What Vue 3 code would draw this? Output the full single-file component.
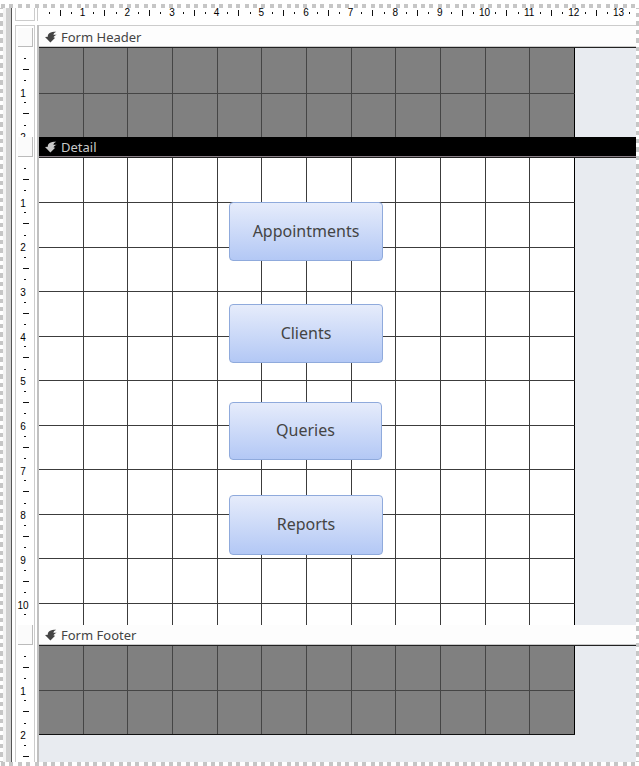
<script setup>
import { reactive } from 'vue'

const sections = [
  { id: 'header', title: 'Form Header', rows: 2, marks: 2 },
  { id: 'detail', title: 'Detail', rows: 11, marks: 10, selected: true },
  { id: 'footer', title: 'Form Footer', rows: 2, marks: 2 },
]

const columns = 12
const rulerUnits = 13

const controls = reactive([
  { caption: 'Appointments', left: 190, top: 44, width: 154, height: 59 },
  { caption: 'Clients', left: 190, top: 146, width: 154, height: 59 },
  { caption: 'Queries', left: 190, top: 244, width: 153, height: 58 },
  { caption: 'Reports', left: 190, top: 337, width: 154, height: 60 },
])

const place = (c) => ({
  left: c.left + 'px',
  top: c.top + 'px',
  width: c.width + 'px',
  height: c.height + 'px',
})
</script>

<template>
  <main class="designer">
    <div class="edge edge-top"></div>
    <div class="middle">
      <div class="edge edge-side"></div>
      <div class="splitter"></div>
      <div class="form">
        <div class="ruler-row">
          <div class="corner"></div>
          <div class="ruler-x">
            <div v-for="n in rulerUnits" :key="n" class="unit-x">
              <i class="dot"></i><i class="tick"></i><i class="dot"></i><span>{{ n }}</span>
            </div>
            <div class="unit-x"><i class="dot"></i></div>
          </div>
        </div>

        <section v-for="s in sections" :key="s.id" class="section" :class="[s.id, { selected: s.selected }]">
          <div class="ruler-y">
            <div class="selector-slot"><span class="selector"></span></div>
            <div class="marks">
              <div v-for="n in s.marks" :key="n" class="unit-y">
                <i class="dot"></i><i class="tick"></i><i class="dot"></i><span>{{ n }}</span>
              </div>
              <div class="unit-y"><i class="dot"></i><i class="tick"></i></div>
            </div>
          </div>
          <div class="content">
            <h2 class="bar">
              <svg class="arrow" viewBox="0 0 12 12" aria-hidden="true">
                <path d="M0 6 L2.8 5.8 C2.8 2.4 5 0.8 11.2 0.8 C9.4 1.6 8.6 2.6 8.4 3.8 L11.8 3.8 C10 4.6 9 5.2 8.6 6.4 L10.2 6.8 L5.4 11.4 Z" />
              </svg>
              {{ s.title }}
            </h2>
            <div class="surface">
              <div class="grid">
                <template v-for="r in s.rows" :key="r">
                  <i v-for="c in columns" :key="c" class="cell"></i>
                </template>
              </div>
              <template v-if="s.id === 'detail'">
                <button v-for="c in controls" :key="c.caption" type="button" class="command" :style="place(c)">
                  {{ c.caption }}
                </button>
              </template>
            </div>
          </div>
        </section>
      </div>
      <div class="edge edge-side"></div>
    </div>
    <div class="edge edge-bottom"></div>
  </main>
</template>

<style>
body {
  margin: 0;
  background: #fff;
}
</style>

<style scoped>
.designer {
  --unit: calc(536px / 12);
  --line: #454545;
  display: flex;
  flex-direction: column;
  min-height: 100vh;
  font-family: 'Noto Sans', 'Open Sans', sans-serif;
  color: #444;
}

.edge {
  flex: none;
}

.edge-top,
.edge-bottom {
  height: 4px;
  background: repeating-linear-gradient(90deg, #fff 0 1px, #c6c6c6 1px 5px, #fff 5px calc(42px / 5));
}

.edge-top {
  margin-top: 4px;
}

.edge-side {
  width: 3px;
  background: repeating-linear-gradient(180deg, #c6c6c6 0 1px, #fff 1px 5px, #c6c6c6 5px calc(42px / 5));
}

.middle {
  flex: 1;
  display: flex;
}

.splitter {
  flex: none;
  box-sizing: border-box;
  width: 9px;
  border-left: 3px solid #f4f4f4;
  border-right: 1px solid #555;
  background: #d0d0d0;
}

.form {
  flex: 1;
  min-width: 0;
  display: flex;
  flex-direction: column;
  margin-left: 3px;
}

.ruler-row {
  display: flex;
  height: 17px;
}

.corner {
  flex: none;
  box-sizing: border-box;
  width: 20px;
  height: 13px;
  border: solid #ccc;
  border-width: 0 1px 1px;
}

.ruler-x {
  flex: 1;
  min-width: 0;
  height: 13px;
  display: flex;
  margin-left: 2px;
  border-left: 1px solid #ccc;
  padding-left: calc(var(--unit) / 8);
  overflow: hidden;
}

.unit-x {
  flex: none;
  width: var(--unit);
  display: grid;
  grid-template-columns: repeat(4, 1fr);
  place-items: center;
  height: 10px;
}

.dot,
.tick {
  background: #111;
}

.unit-x .dot {
  width: 1px;
  height: 2px;
}

.unit-x .tick {
  width: 1px;
  height: 6px;
}

.unit-x span,
.unit-y span {
  display: flex;
  justify-content: center;
  width: 11px;
  font: 10px/10px 'Liberation Sans', Arial, sans-serif;
  color: #000;
}

.section {
  display: flex;
}

.section.footer {
  flex: 1;
}

.ruler-y {
  flex: none;
  box-sizing: border-box;
  width: 20px;
  border: solid #ccc;
  border-width: 0 1px;
  display: flex;
  flex-direction: column;
}

.header .ruler-y {
  border-top-width: 1px;
}

.selector-slot {
  flex: none;
  box-sizing: border-box;
  height: 20px;
  display: flex;
  padding: 0 1px 0 2px;
}

.header .selector-slot {
  height: 21px;
  padding-top: 2px;
}

.selector {
  flex: 1;
  border: solid #bbb;
  border-width: 0 1px 1px 0;
  background: #fbfbfb;
}

.marks {
  flex: 1 1 0;
  min-height: 0;
  overflow: hidden;
  padding-top: calc(var(--unit) / 8);
}

.unit-y {
  height: var(--unit);
  display: grid;
  grid-template-rows: repeat(4, 1fr);
  place-items: center;
}

.unit-y .dot {
  width: 2px;
  height: 1px;
}

.unit-y .tick {
  width: 6px;
  height: 1px;
  margin-left: 2px;
}

.unit-y span {
  margin: 2px 4px -2px 0;
}

.content {
  flex: 1;
  min-width: 0;
  display: flex;
  flex-direction: column;
  margin-left: 2px;
  border-left: 2px solid #c0c0c0;
  background: #e8ebf0;
}

.bar {
  box-sizing: border-box;
  height: 20px;
  margin: 0;
  padding-left: 6px;
  display: flex;
  align-items: center;
  gap: 4px;
  border-bottom: 1px solid #ccc;
  background: #fdfdfd;
  font-size: 13px;
  font-weight: 400;
  line-height: 18px;
}

.header .bar {
  height: 22px;
  padding-top: 2px;
  border-top: 1px solid #ccc;
}

.arrow {
  width: 12px;
  height: 12px;
  fill: #444;
}

.selected .bar {
  background: #000;
  border-color: #8a8088;
  color: #c8c8c8;
}

.selected .arrow {
  fill: #c8c8c8;
}

.surface {
  position: relative;
  border-top: 1px solid #222;
}

.grid {
  box-sizing: border-box;
  width: 536px;
  height: 89px;
  display: grid;
  grid-template-columns: repeat(12, 1fr);
  grid-auto-rows: 1fr;
  background: #808080;
}

.detail .grid {
  --line: #3c3c3c;
  height: 467px;
  grid-template-rows: repeat(10, 2fr) 1fr;
  background: #fff;
}

.footer .grid {
  border-bottom: 1px solid #111;
}

.cell {
  border: solid var(--line);
  border-width: 1px 1px 0 0;
}

.cell:nth-child(-n + 12) {
  border-top: 0;
}

.cell:nth-child(12n) {
  border-right-color: #000;
}

.command {
  position: absolute;
  box-sizing: border-box;
  padding: 0 0 2px;
  border: 1px solid #8faadc;
  border-radius: 4px;
  background: linear-gradient(#e6ecfb, #b3c8f5);
  color: #444;
  font-family: inherit;
  font-size: 16px;
  line-height: 20px;
}
</style>
